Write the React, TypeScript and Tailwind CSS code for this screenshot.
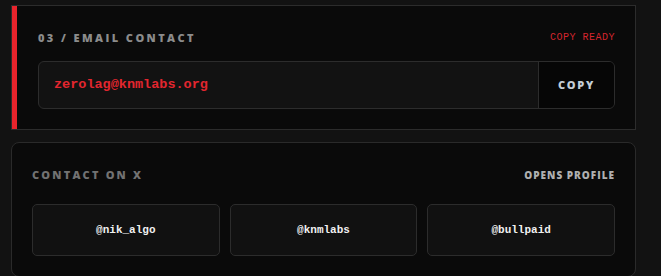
const handles = ["@nik_algo", "@knmlabs", "@bullpaid"];

const sans = "font-['Open_Sans','Noto_Sans',sans-serif]";
const mono = "font-['Liberation_Mono','DejaVu_Sans_Mono',monospace]";

export default function App() {
  return (
    <main className="min-h-screen bg-[#121212] pl-[11px] pt-[5px]">
      <div className="flex w-[625px] flex-col gap-[12px]">
        {/* EMAIL CARD */}
        <section className="border border-[#2c2c2c] bg-[#0a0a0a] pb-5 pl-[26px] pr-5 pt-6 shadow-[inset_5px_0_0_#e8242c]">
          <div className="mb-[15px] flex h-4 items-center justify-between leading-4">
            <p className={`${sans} text-[11px] font-extrabold uppercase tracking-[0.22em] text-[#8c8c8c]`}>
              03 / Email Contact
            </p>
            <p className={`${mono} text-[10px] uppercase tracking-[0.05em] text-[#d4262e]`}>
              Copy ready
            </p>
          </div>

          <div className="flex h-12 overflow-hidden rounded-md border border-[#2c2c2c] bg-[#121212]">
            <div className="flex flex-1 items-center pl-[15px]">
              <span className={`${mono} text-[13.5px] font-bold text-[#e3262f]`}>
                zerolag@knmlabs.org
              </span>
            </div>
            <button
              className={`${sans} w-[76px] border-l border-[#2c2c2c] bg-[#060606] text-[11px] font-extrabold uppercase tracking-[0.16em] text-[#c3cdd6]`}
            >
              Copy
            </button>
          </div>
        </section>

        {/* X CONTACTS */}
        <section className="rounded-lg border border-[#2a2a2a] bg-[#0a0a0a] px-5 pb-5 pt-6">
          <div className="mb-[21px] flex h-4 items-center justify-between leading-4">
            <p className={`${sans} text-[11px] font-extrabold uppercase tracking-[0.2em] text-[#727272]`}>
              Contact on X
            </p>
            <p className={`${sans} text-[10px] font-extrabold uppercase tracking-[0.1em] text-[#b0b0b0]`}>
              Opens profile
            </p>
          </div>

          <div className="grid grid-cols-3 gap-[10px]">
            {handles.map((h) => (
              <button
                key={h}
                className={`${mono} flex h-[52px] items-center justify-center rounded-[5px] border border-[#2c2c2c] bg-[#111111] text-[11px] font-bold text-[#f0f0f0]`}
              >
                {h}
              </button>
            ))}
          </div>
        </section>
      </div>
    </main>
  );
}
